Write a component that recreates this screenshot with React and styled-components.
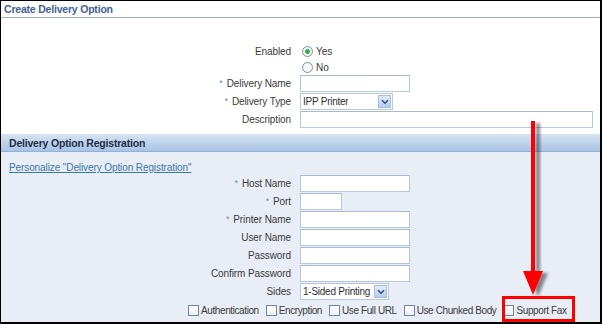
import styled, { createGlobalStyle } from "styled-components"

const GlobalStyle = createGlobalStyle`
  body {
    margin: 0;
    background: #fff;
    font-family: "Liberation Sans", Arial, sans-serif;
  }
`

const topRows = [
    { label: "Delivery Name", required: true, field: "input", width: 110 },
    { label: "Delivery Type", required: true, field: "select", width: 93, value: "IPP Printer" },
    { label: "Description", field: "input", width: 293 },
]

const regRows = [
    { label: "Host Name", required: true, field: "input", width: 110 },
    { label: "Port", required: true, field: "input", width: 42 },
    { label: "Printer Name", required: true, field: "input", width: 110 },
    { label: "User Name", field: "input", width: 110 },
    { label: "Password", field: "input", width: 110 },
    { label: "Confirm Password", field: "input", width: 110 },
    { label: "Sides", field: "select", width: 89, value: "1-Sided Printing" },
]

const options = ["Authentication", "Encryption", "Use Full URL", "Use Chunked Body", "Support Fax"]

function Field({ row }) {
    if (row.field === "select") {
        return (
            <Select $w={row.width}>
                <SelectText>{row.value}</SelectText>
                <DropButton>
                    <svg width="8" height="6" viewBox="0 0 8 6">
                        <path d="M1 1.2 L4 4.2 L7 1.2" fill="none" stroke="#2f4f86" strokeWidth="1.6" />
                    </svg>
                </DropButton>
            </Select>
        )
    }
    return <Input $w={row.width} />
}

function FormRow({ row }) {
    return (
        <Row>
            <Label>
                {row.required && <Star>*</Star>}
                {row.label}
            </Label>
            <Field row={row} />
        </Row>
    )
}

export default function App() {
    return (
        <>
            <GlobalStyle />
            <Frame>
                <Title>Create Delivery Option</Title>
                <TopSection>
                    <Row $h={16}>
                        <Label>Enabled</Label>
                        <RadioItem>
                            <Radio $on />
                            Yes
                        </RadioItem>
                    </Row>
                    <Row $h={16}>
                        <span />
                        <RadioItem>
                            <Radio />
                            No
                        </RadioItem>
                    </Row>
                    {topRows.map(r => <FormRow key={r.label} row={r} />)}
                </TopSection>
                <SectionHeader>Delivery Option Registration</SectionHeader>
                <RegSection>
                    <Link href="#">Personalize "Delivery Option Registration"</Link>
                    {regRows.map(r => <FormRow key={r.label} row={r} />)}
                    <CheckRow>
                        {options.map(o => (
                            <CheckItem key={o}>
                                <CheckBox />
                                {o}
                            </CheckItem>
                        ))}
                    </CheckRow>
                </RegSection>

                <Arrow width="30" height="185" viewBox="0 0 30 185">
                    <defs>
                        <filter id="shadow" x="-50%" y="-10%" width="200%" height="120%">
                            <feGaussianBlur in="SourceAlpha" stdDeviation="1.6" />
                            <feOffset dx="5" dy="2" />
                            <feComponentTransfer>
                                <feFuncA type="linear" slope="0.45" />
                            </feComponentTransfer>
                            <feMerge>
                                <feMergeNode />
                                <feMergeNode in="SourceGraphic" />
                            </feMerge>
                        </filter>
                    </defs>
                    <g filter="url(#shadow)">
                        <rect x="8" y="0" width="4" height="156" fill="#f00" />
                        <path d="M0 150 L20 150 L10 174 Z" fill="#f00" />
                    </g>
                </Arrow>
                <Highlight />
            </Frame>
        </>
    )
}

const Frame = styled.div`
    position: relative;
    width: 602px;
    height: 324px;
    box-sizing: border-box;
    border: 1px solid #000;
    border-right-width: 2px;
    border-bottom-width: 2px;
    display: flex;
    flex-direction: column;
    overflow: hidden;
    font-size: 10px;
    color: #3a3a3a;
`
const Title = styled.div`
    height: 16px;
    line-height: 17px;
    padding-left: 3px;
    border-bottom: 1px solid #9badc9;
    font-weight: bold;
    font-size: 10.5px;
    color: #3f5e94;
    letter-spacing: -0.2px;
`
const TopSection = styled.div`
    height: 116px;
    padding-top: 25px;
    box-sizing: border-box;
    display: flex;
    flex-direction: column;
`
const Row = styled.div`
    display: grid;
    grid-template-columns: 290px 1fr;
    column-gap: 9px;
    align-items: center;
    height: ${p => p.$h || 17}px;
    margin-bottom: ${p => (p.$h ? 0 : 1)}px;
`
const Label = styled.div`
    text-align: right;
    white-space: nowrap;
    letter-spacing: -0.1px;
`
const Star = styled.span`
    color: #6b8ec2;
    font-size: 9px;
    margin-right: 4px;
    vertical-align: 1px;
`
const RadioItem = styled.label`
    display: flex;
    align-items: center;
    gap: 3px;
    margin-left: 2px;
`
const Radio = styled.span`
    width: 9px;
    height: 9px;
    border-radius: 50%;
    border: 1px solid #7f8fa6;
    background: radial-gradient(circle, ${p => (p.$on ? "#3fb04a 0, #3fb04a 2.2px," : "")} #fff 2.6px, #e4e8ee 100%);
`
const Input = styled.div`
    width: ${p => p.$w}px;
    height: 17px;
    box-sizing: border-box;
    border: 1px solid #b8c8dc;
    border-top-color: #a9bad0;
    background: #fff;
`
const Select = styled.div`
    width: ${p => p.$w}px;
    height: 17px;
    box-sizing: border-box;
    border: 1px solid #b8c8dc;
    background: #fff;
    display: flex;
    align-items: center;
    justify-content: space-between;
    padding-left: 2px;
    color: #2f2f2f;
`
const SelectText = styled.span`
    white-space: nowrap;
    overflow: hidden;
    letter-spacing: -0.25px;
`
const DropButton = styled.span`
    flex: none;
    width: 13px;
    height: 13px;
    margin-right: 1px;
    display: flex;
    align-items: center;
    justify-content: center;
    border: 1px solid #a6bde0;
    box-sizing: border-box;
    background: linear-gradient(#e3ecf9, #b8cdee);
`
const SectionHeader = styled.div`
    height: 16px;
    line-height: 16px;
    padding-left: 8px;
    border-top: 1px solid #d5e1ef;
    border-bottom: 1px solid #93b2d6;
    background: linear-gradient(#d4e2f2, #a8c4e4);
    font-weight: bold;
    font-size: 10.5px;
    color: #1f2d48;
    letter-spacing: -0.2px;
`
const RegSection = styled.div`
    flex: 1;
    background: #e9eef6;
    padding-top: 10px;
    display: flex;
    flex-direction: column;
`
const Link = styled.a`
    align-self: flex-start;
    margin-left: 8px;
    height: 12px;
    line-height: 12px;
    margin-bottom: 1px;
    color: #3a78a6;
    text-decoration: underline;
    letter-spacing: -0.1px;
`
const CheckRow = styled.div`
    display: flex;
    align-items: center;
    gap: 7px;
    height: 17px;
    margin-top: 1px;
    margin-left: 187px;
    letter-spacing: -0.4px;
`
const CheckItem = styled.label`
    display: flex;
    align-items: center;
    gap: 2px;
    white-space: nowrap;
`
const CheckBox = styled.span`
    width: 11px;
    height: 11px;
    box-sizing: border-box;
    border: 1px solid #6f84a4;
    background: linear-gradient(#fff, #eef1f5);
`
const Arrow = styled.svg`
    position: absolute;
    left: 522px;
    top: 120px;
    overflow: visible;
`
const Highlight = styled.div`
    position: absolute;
    left: 501px;
    top: 295px;
    width: 73px;
    height: 26px;
    box-sizing: border-box;
    border: 3px solid #f00;
`
